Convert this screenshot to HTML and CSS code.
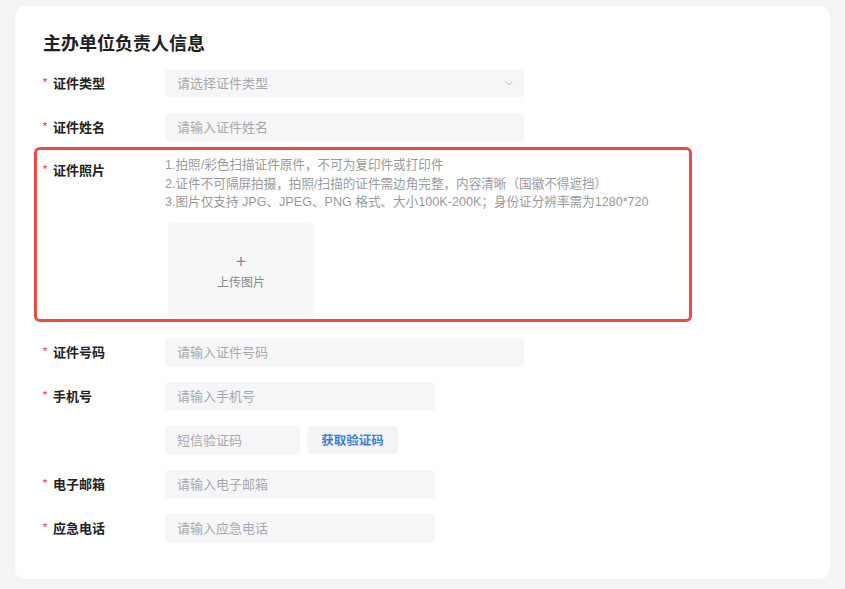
FILE: index.html
```html
<!DOCTYPE html>
<html lang="zh-CN">
<head>
<meta charset="utf-8">
<link rel="stylesheet" href="styles.css">
</head>
<body>
<div class="card">
  <h2 class="title">主办单位负责人信息</h2>
  <div class="form">
    <div class="row">
      <div class="label"><span class="req">*</span>证件类型</div>
      <div class="field">
        <div class="input w-lg select">请选择证件类型
          <svg class="chev" width="8" height="5" viewBox="0 0 8 5"><path d="M0.5 0.5 L4 4 L7.5 0.5" fill="none" stroke="#b8b8b8" stroke-width="0.9"/></svg>
        </div>
      </div>
    </div>
    <div class="row">
      <div class="label"><span class="req">*</span>证件姓名</div>
      <div class="field"><div class="input w-lg">请输入证件姓名</div></div>
    </div>
    <div class="row photo">
      <div class="label"><span class="req">*</span>证件照片</div>
      <div class="field">
        <div class="hints">
          <p>1.拍照/彩色扫描证件原件，不可为复印件或打印件</p>
          <p>2.证件不可隔屏拍摄，拍照/扫描的证件需边角完整，内容清晰（国徽不得遮挡）</p>
          <p>3.图片仅支持 JPG、JPEG、PNG 格式、大小100K-200K；身份证分辨率需为1280*720</p>
        </div>
        <div class="upload">
          <span class="plus">+</span>
          <span class="up-text">上传图片</span>
        </div>
      </div>
    </div>
    <div class="row">
      <div class="label"><span class="req">*</span>证件号码</div>
      <div class="field"><div class="input w-lg">请输入证件号码</div></div>
    </div>
    <div class="row">
      <div class="label"><span class="req">*</span>手机号</div>
      <div class="field"><div class="input w-md">请输入手机号</div></div>
    </div>
    <div class="row">
      <div class="label"></div>
      <div class="field code">
        <div class="input w-sm">短信验证码</div>
        <div class="btn">获取验证码</div>
      </div>
    </div>
    <div class="row">
      <div class="label"><span class="req">*</span>电子邮箱</div>
      <div class="field"><div class="input w-md">请输入电子邮箱</div></div>
    </div>
    <div class="row">
      <div class="label"><span class="req">*</span>应急电话</div>
      <div class="field"><div class="input w-md">请输入应急电话</div></div>
    </div>
  </div>
</div>
</body>
</html>
```

FILE: styles.css
```css
* { box-sizing: border-box; }
html, body { margin: 0; padding: 0; }
body {
  background: #f4f4f5;
  font-family: "Noto Sans CJK SC", "Noto Sans", sans-serif;
  width: 845px;
  height: 589px;
  overflow: hidden;
}
.card {
  margin: 6px 0 0 15px;
  width: 815px;
  height: 573px;
  background: #ffffff;
  border-radius: 10px;
  padding: 27px 0 0 27px;
}
.title {
  margin: 0 0 0 1px;
  font-size: 18px;
  font-weight: 700;
  color: #1f1f1f;
  line-height: 18px;
}
.form {
  margin-top: 18px;
  display: flex;
  flex-direction: column;
  gap: 16px;
}
.row {
  display: flex;
  align-items: flex-start;
}
.label {
  width: 123px;
  flex: none;
  font-size: 13px;
  line-height: 28px;
  font-weight: 600;
  color: #222;
}
.req {
  color: #e35a52;
  font-weight: 400;
  margin-right: 5px;
}
.field { display: flex; flex-direction: column; }
.input {
  height: 28px;
  line-height: 28px;
  padding-left: 12px;
  background: #f6f6f8;
  border-radius: 4px;
  font-size: 13px;
  color: #a8a8ab;
  box-shadow: 0 1px 1px rgba(0,0,0,0.025);
}
.w-lg { width: 359px; }
.w-md { width: 270px; }
.w-sm { width: 135px; }
.select { position: relative; }
.chev { position: absolute; right: 11px; top: 12px; }
.photo { position: relative; }
.photo .label { line-height: 26px; }
.photo::after {
  content: "";
  position: absolute;
  left: -8px;
  top: -10px;
  width: 652px;
  height: 169px;
  border: 3px solid #ef4b45;
  border-radius: 6px;
  pointer-events: none;
}
.hints { margin-top: -1px; }
.hints p {
  margin: 0;
  font-family: "Liberation Sans", "Noto Sans CJK SC", sans-serif;
  font-size: 12.6px;
  line-height: 18.5px;
  color: #9a9a9d;
  white-space: nowrap;
}
.upload {
  margin: 11px 0 0 3px;
  width: 146px;
  height: 96px;
  background: #f7f7f8;
  border-radius: 4px;
  display: flex;
  flex-direction: column;
  align-items: center;
  padding-top: 28px;
  color: #8a8a8d;
}
.plus { font-size: 18px; line-height: 18px; }
.up-text { font-size: 12px; line-height: 16px; margin-top: 5px; }
.photo + .row { margin-top: 3px; }
.code { flex-direction: row; gap: 7px; }
.btn {
  width: 91px;
  height: 28px;
  line-height: 28px;
  text-align: center;
  background: #f5f5f7;
  border-radius: 4px;
  font-size: 12.5px;
  font-weight: 700;
  color: #3a7fd8;
}
```
